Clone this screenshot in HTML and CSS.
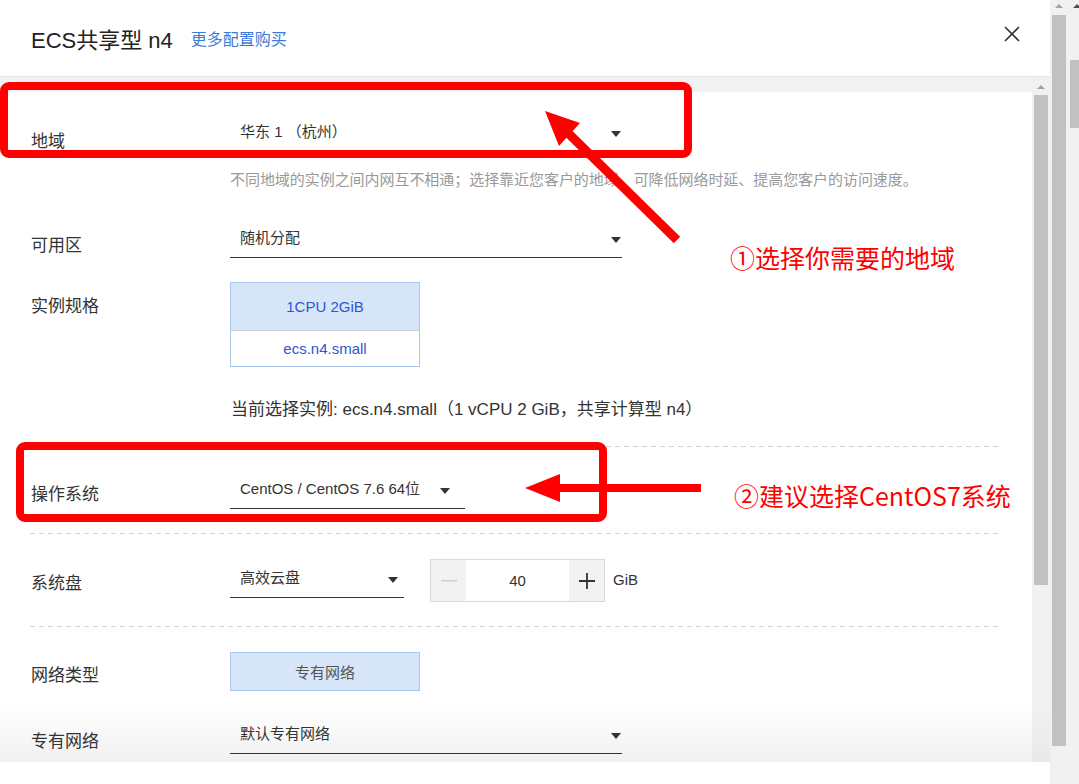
FILE: index.html
```html
<!DOCTYPE html>
<html lang="zh-CN">
<head>
<meta charset="utf-8">
<title>ECS共享型 n4</title>
<link rel="stylesheet" href="styles.css">
</head>
<body>
<div class="window">
  <div class="main">
    <header class="hd">
      <span class="title">ECS共享型 n4</span>
      <a class="more">更多配置购买</a>
      <span class="close">
        <svg width="16" height="16" viewBox="0 0 16 16"><path d="M1 1L15 15M15 1L1 15" stroke="#333" stroke-width="1.6" fill="none"/></svg>
      </span>
    </header>
    <div class="panel">
      <div class="scrollarea">
        <div class="band"></div>
        <div class="form">
          <div class="row r-region">
            <div class="label lb-9">地域</div>
            <div class="select w-lg">华东 1 （杭州）<i class="caret"></i></div>
          </div>
          <div class="help">不同地域的实例之间内网互不相通；选择靠近您客户的地域，可降低网络时延、提高您客户的访问速度。</div>
          <div class="row r-zone">
            <div class="label lb-8">可用区</div>
            <div class="select w-lg">随机分配<i class="caret"></i></div>
          </div>
          <div class="row r-spec">
            <div class="label lb-13">实例规格</div>
            <div class="spec">
              <div class="spec-top">1CPU 2GiB</div>
              <div class="spec-bot">ecs.n4.small</div>
            </div>
          </div>
          <div class="current">当前选择实例: ecs.n4.small（1 vCPU 2 GiB，共享计算型 n4）</div>
          <div class="dash d-1"></div>
          <div class="row r-os">
            <div class="label lb-6">操作系统</div>
            <div class="select w-os">CentOS / CentOS 7.6 64位<i class="caret"></i></div>
          </div>
          <div class="dash d-2"></div>
          <div class="row r-disk">
            <div class="label lb-13">系统盘</div>
            <div class="select w-disk">高效云盘<i class="caret"></i></div>
            <div class="num">
              <span class="nbtn minus"><svg width="16" height="2" viewBox="0 0 16 2"><rect width="16" height="1.5" fill="#cfcfcf"/></svg></span>
              <span class="nval">40</span>
              <span class="nbtn plus"><svg width="16" height="16" viewBox="0 0 16 16"><path d="M8 0V16M0 8H16" stroke="#333" stroke-width="1.8"/></svg></span>
            </div>
            <span class="unit">GiB</span>
          </div>
          <div class="dash d-3"></div>
          <div class="row r-net">
            <div class="label lb-12">网络类型</div>
            <div class="netbtn">专有网络</div>
          </div>
          <div class="row r-vpc">
            <div class="label lb-8">专有网络</div>
            <div class="select w-lg">默认专有网络<i class="caret"></i></div>
          </div>
        </div>
      </div>
      <div class="vscroll inner">
        <i class="sarrow"></i>
        <div class="thumb"></div>
      </div>
    </div>
  </div>
  <div class="outer">
    <div class="vscroll o1">
      <i class="sarrow"></i>
      <div class="thumb"></div>
    </div>
    <div class="vscroll o2">
      <i class="sarrow dark"></i>
      <div class="thumb"></div>
    </div>
  </div>
</div>

<svg class="annot" width="1079" height="784" viewBox="0 0 1079 784">
  <rect x="4" y="86" width="684" height="68" rx="5" fill="none" stroke="#ff0000" stroke-width="8"/>
  <rect x="20" y="446" width="583" height="72" rx="5" fill="none" stroke="#ff0000" stroke-width="8"/>
  <line x1="567" y1="132" x2="677" y2="240" stroke="#ff0000" stroke-width="9"/>
  <polygon points="545,111 580,123 559,146" fill="#ff0000"/>
  <rect x="556" y="484" width="145" height="8" fill="#ff0000"/>
  <polygon points="525,488 560,474 560,502" fill="#ff0000"/>
</svg>
<div class="note n1">①选择你需要的地域</div>
<div class="note n2">②建议选择CentOS7系统</div>
</body>
</html>
```

FILE: styles.css
```css
html, body {
  margin: 0;
  padding: 0;
  background: #fff;
}
body {
  position: relative;
  width: 1079px;
  height: 784px;
  overflow: hidden;
  font-family: "Liberation Sans", "Noto Sans CJK SC", sans-serif;
  color: #333;
}
.window {
  display: flex;
  width: 1079px;
  height: 784px;
}
.main {
  width: 1050px;
  flex: none;
}
.hd {
  height: 76px;
  border-bottom: 1px solid #e4e5e7;
  display: flex;
  align-items: center;
  padding: 0 30px 0 31px;
  box-sizing: content-box;
  width: 989px;
}
.title {
  font-size: 22px;
  color: #222;
  margin-top: -1px;
}
.more {
  margin-left: 18px;
  font-size: 16px;
  color: #3d7bd9;
}
.close {
  margin-left: auto;
  display: flex;
  margin-top: -8px;
}
.panel {
  display: flex;
  height: 685px;
}
.scrollarea {
  width: 1032px;
  height: 685px;
  overflow: hidden;
  background: linear-gradient(to bottom, #fff 0, #fff calc(100% - 60px), #f1f1f1 100%);
}
.band {
  height: 15px;
  background: #f1f2f4;
}
.form {
  padding: 0 31px 0 30px;
}
.row {
  display: flex;
  align-items: flex-start;
}
.label {
  width: 200px;
  flex: none;
  font-size: 17px;
  line-height: 24px;
  padding-left: 1px;
  box-sizing: border-box;
  color: #333;
}
.lb-6 { margin-top: 6px; }
.lb-8 { margin-top: 8px; }
.lb-9 { margin-top: 10px; }
.lb-12 { margin-top: 12px; }
.lb-13 { margin-top: 13px; }
.select {
  position: relative;
  height: 32px;
  box-sizing: border-box;
  border-bottom: 1px solid #333;
  padding: 0 10px;
  font-size: 15px;
  line-height: 24px;
  color: #333;
}
.w-lg { width: 392px; }
.w-os { width: 235px; }
.w-disk { width: 174px; margin-top: 7px; }
.caret {
  position: absolute;
  top: 11px;
  right: 1px;
  width: 0;
  height: 0;
  border-left: 5.5px solid transparent;
  border-right: 5.5px solid transparent;
  border-top: 6px solid #333;
}
.w-os .caret { right: 15px; }
.w-disk .caret { right: 6px; }
.r-region { margin-top: 28px; }
.help {
  margin-top: 16px;
  padding-left: 200px;
  font-size: 15px;
  letter-spacing: -0.05px;
  line-height: 20px;
  color: #999;
}
.r-zone { margin-top: 36px; }
.r-spec { margin-top: 24px; }
.spec {
  width: 190px;
  border: 1px solid #a9c8ee;
  box-sizing: border-box;
  font-size: 15px;
  color: #2d56cf;
}
.spec-top {
  height: 47px;
  background: #d6e6f8;
  border-bottom: 1px solid #c9ced6;
  display: flex;
  align-items: center;
  justify-content: center;
}
.spec-bot {
  height: 35px;
  display: flex;
  align-items: center;
  justify-content: center;
}
.current {
  margin-top: 31px;
  padding-left: 201px;
  font-size: 17px;
  line-height: 24px;
  color: #333;
}
.dash {
  height: 1px;
  background: repeating-linear-gradient(to right, #d2d2d2 0 5px, transparent 5px 9px);
}
.d-1 { margin-top: 24px; }
.r-os { margin-top: 30px; }
.d-2 { margin-top: 24px; }
.r-disk { margin-top: 25px; }
.num {
  display: flex;
  width: 175px;
  height: 43px;
  box-sizing: border-box;
  border: 1px solid #d9d9d9;
  margin-left: 26px;
}
.nbtn {
  width: 35px;
  flex: none;
  background: #f2f2f2;
  display: flex;
  align-items: center;
  justify-content: center;
}
.nval {
  flex: 1;
  text-align: center;
  font-size: 15px;
  line-height: 41px;
  color: #333;
}
.unit {
  margin-left: 8px;
  font-size: 15px;
  line-height: 41px;
  color: #333;
}
.d-3 { margin-top: 24px; }
.r-net { margin-top: 25px; }
.netbtn {
  width: 190px;
  height: 39px;
  box-sizing: border-box;
  border: 1px solid #a9c8ee;
  background: #d6e6f8;
  display: flex;
  align-items: center;
  justify-content: center;
  font-size: 15px;
  color: #555;
}
.r-vpc { margin-top: 31px; }
.vscroll {
  position: relative;
  background: #f1f1f1;
  flex: none;
}
.vscroll .thumb {
  position: absolute;
  background: #c1c1c1;
}
.sarrow {
  position: absolute;
  width: 0;
  height: 0;
  border-left: 4px solid transparent;
  border-right: 4px solid transparent;
  border-bottom: 4px solid #a3a3a3;
}
.sarrow.dark { border-bottom-color: #505050; }
.inner {
  width: 18px;
  height: 685px;
  background: linear-gradient(to bottom, #f1f1f1 0, #f1f1f1 calc(100% - 60px), #e9e9e9 100%);
}
.inner .sarrow { left: 5px; top: 8px; }
.inner .thumb { left: 2px; right: 2px; top: 18px; height: 490px; }
.outer {
  display: flex;
  width: 29px;
  height: 784px;
  background: #f1f1f1;
}
.o1 {
  width: 18px;
  height: 784px;
}
.o1 .sarrow { left: 5px; top: 4px; }
.o1 .thumb { left: 2px; right: 2px; top: 15px; height: 731px; }
.o2 {
  width: 11px;
  height: 784px;
}
.o2 .sarrow { left: 5px; top: 4px; }
.o2 .thumb { left: 2px; right: 0; top: 60px; height: 68px; }
.annot {
  position: absolute;
  left: 0;
  top: 0;
  pointer-events: none;
}
.note {
  position: absolute;
  font-family: "Noto Sans CJK SC", sans-serif;
  font-size: 25px;
  line-height: 25px;
  color: #ff0000;
  white-space: nowrap;
}
.n1 { left: 730px; top: 245px; }
.n2 { left: 734px; top: 483px; }
```
